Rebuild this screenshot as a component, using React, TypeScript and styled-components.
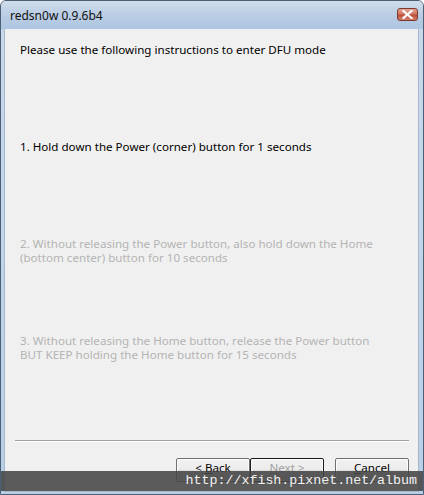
import styled, { createGlobalStyle } from "styled-components";

const GlobalStyle = createGlobalStyle`
  html, body {
    margin: 0;
    padding: 0;
    background: #ffffff;
  }
  * {
    box-sizing: border-box;
  }
`;

const steps = [
  {
    text: "1. Hold down the Power (corner) button for 1 seconds",
    active: true,
  },
  {
    text: "2. Without releasing the Power button, also hold down the Home\n(bottom center) button for 10 seconds",
    active: false,
  },
  {
    text: "3. Without releasing the Home button, release the Power button\nBUT KEEP holding the Home button for 15 seconds",
    active: false,
  },
];

export default function App() {
  return (
    <>
      <GlobalStyle />
      <Window>
        <TitleBar>
          <Title>redsn0w 0.9.6b4</Title>
          <CloseButton>
            <svg width="11" height="9" viewBox="0 0 11 9">
              <path
                d="M1.5 1 L9.5 8 M9.5 1 L1.5 8"
                stroke="#ffffff"
                strokeWidth="2.2"
                strokeLinecap="square"
              />
            </svg>
          </CloseButton>
        </TitleBar>
        <Client>
          <Content>
            <Intro>Please use the following instructions to enter DFU mode</Intro>
            {steps.map((s, i) => (
              <Step key={i} $active={s.active}>
                {s.text}
              </Step>
            ))}
          </Content>
          <Separator />
          <ButtonRow>
            <Button>
              <span>
                &lt; <u>B</u>ack
              </span>
            </Button>
            <Button $focused $disabled>
              <span>
                <u>N</u>ext &gt;
              </span>
            </Button>
            <Gap />
            <Button>
              <span>
                <u>C</u>ancel
              </span>
            </Button>
          </ButtonRow>
        </Client>
        <Watermark>http://xfish.pixnet.net/album</Watermark>
      </Window>
    </>
  );
}

const Window = styled.div`
  position: relative;
  width: 424px;
  height: 495px;
  display: flex;
  flex-direction: column;
  background: linear-gradient(180deg, #c9d9eb 0%, #b9cfe7 100%);
  border: 1px solid #4b5f76;
  border-radius: 6px 6px 0 0;
  overflow: hidden;
  font-family: "Noto Sans", "DejaVu Sans", sans-serif;
`;

const TitleBar = styled.div`
  height: 28px;
  display: flex;
  align-items: center;
  justify-content: space-between;
  padding: 0 5px 0 9px;
  background: linear-gradient(180deg, #cfdcec 0%, #b7cbe3 60%, #aec6e2 100%);
`;

const Title = styled.span`
  font-size: 12px;
  color: #111111;
  margin-top: 1px;
`;

const CloseButton = styled.div`
  width: 21px;
  height: 13px;
  margin-top: -2px;
  display: flex;
  align-items: center;
  justify-content: center;
  border: 1px solid #7a3a2e;
  border-radius: 3px;
  background: linear-gradient(180deg, #e6a595 0%, #d27560 45%, #bb4e38 55%, #d5806a 100%);
`;

const Client = styled.div`
  flex: 1;
  margin: 0 4px 2px 3px;
  background: #f0f0f0;
  border: 1px solid #a6b8cc;
  border-top: none;
  display: flex;
  flex-direction: column;
  padding: 0 9px 0 10px;
`;

const Content = styled.div`
  flex: 1;
  display: flex;
  flex-direction: column;
  padding: 14px 0 0 5px;
`;

const Intro = styled.div`
  font-size: 11.6px;
  line-height: 14px;
  color: #000000;
  height: 97px;
`;

const Step = styled.div<{ $active?: boolean }>`
  font-size: 11.6px;
  line-height: 14px;
  white-space: pre-line;
  color: ${(p) => (p.$active ? "#000000" : "#b4b4b4")};
  height: 97px;
`;

const Separator = styled.div`
  height: 2px;
  border-top: 1px solid #a0a0a0;
  border-bottom: 1px solid #ffffff;
  margin: 0 0 16px 0;
`;

const ButtonRow = styled.div`
  display: flex;
  justify-content: flex-end;
  padding-bottom: 9px;
`;

const Gap = styled.div`
  width: 11px;
`;

const Button = styled.div<{ $focused?: boolean; $disabled?: boolean }>`
  width: 74px;
  height: 24px;
  display: flex;
  align-items: flex-start;
  justify-content: center;
  padding-top: 2px;
  font-size: 11.6px;
  line-height: 14px;
  color: ${(p) => (p.$disabled ? "#a0a0a0" : "#000000")};
  background: linear-gradient(180deg, #f2f2f2 0%, #ebebeb 50%, #dddddd 51%, #cfcfcf 100%);
  border: 1px solid ${(p) => (p.$focused ? "#1a1a1a" : "#707070")};
  border-radius: 2px;
  box-shadow: inset 0 0 0 1px #fcfcfc;

  u {
    text-decoration: underline;
  }
`;

const Watermark = styled.div`
  position: absolute;
  left: 0;
  right: 0;
  bottom: 3px;
  height: 20px;
  background: rgba(70, 70, 70, 0.88);
  color: #f2f2f2;
  font-family: "Liberation Mono", "Courier New", monospace;
  font-size: 13.3px;
  line-height: 20px;
  text-align: right;
  padding-right: 6px;
`;
